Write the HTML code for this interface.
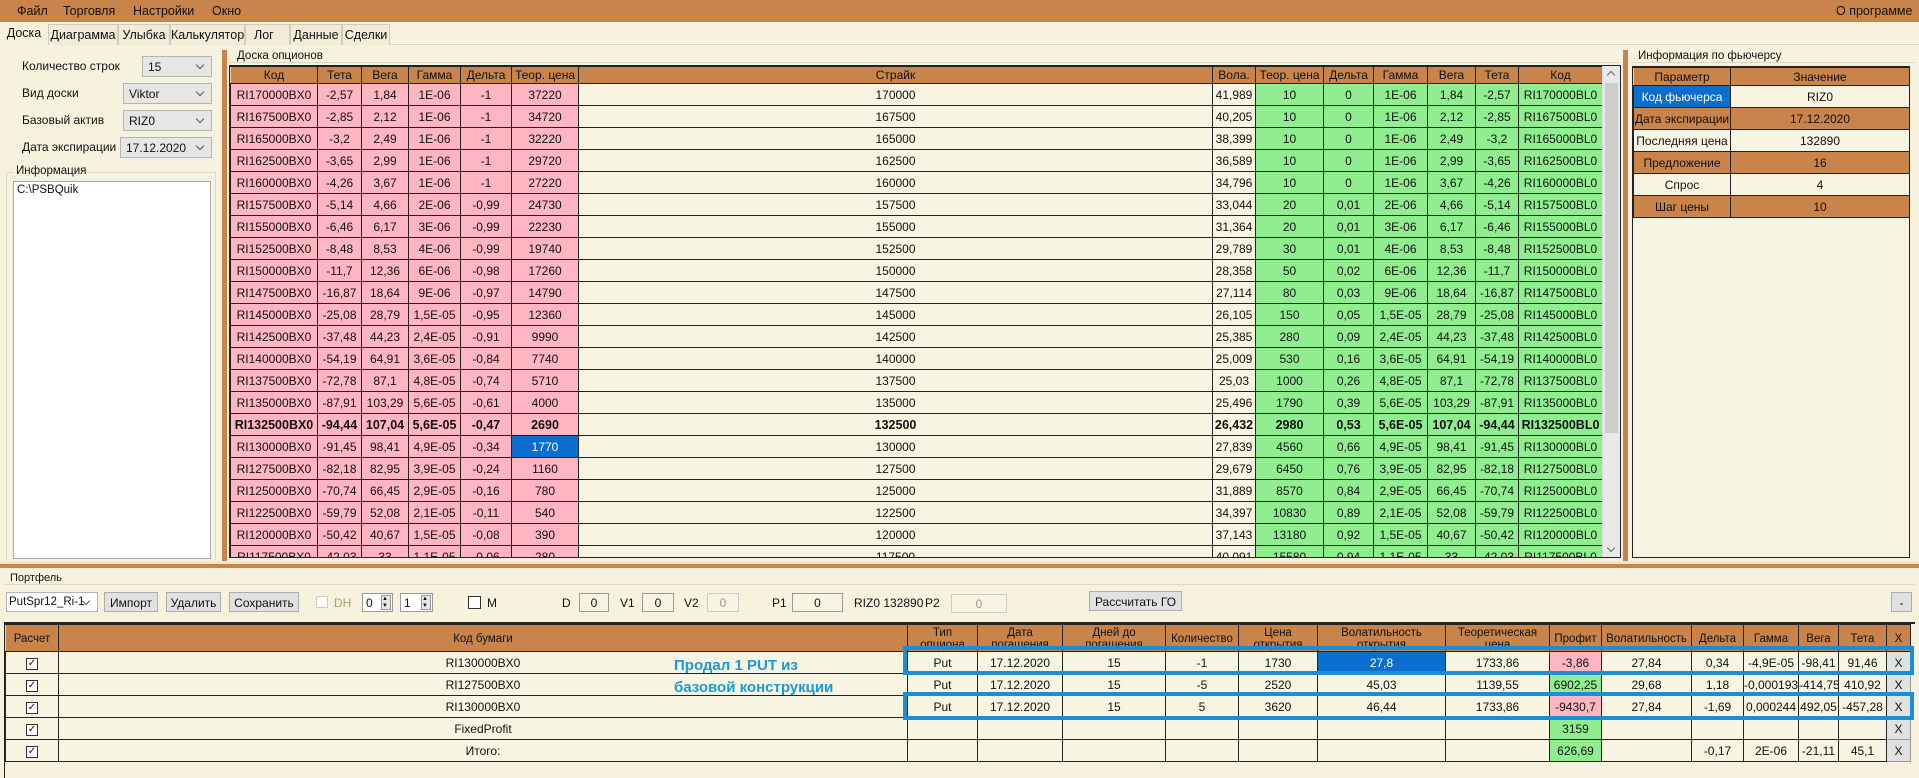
<!DOCTYPE html>
<html><head><meta charset="utf-8"><style>
*{box-sizing:border-box;margin:0;padding:0}
body{width:1919px;height:778px;overflow:hidden;background:#F6F2DE;font-family:"Liberation Sans","DejaVu Sans",sans-serif;font-size:12px;color:#111;position:relative}
.a{position:absolute}
.menu{left:0;top:0;width:1919px;height:22px;background:#C8844A;}
.menu span{position:absolute;top:4px;font-size:12.5px}
.tabs{left:0;top:22px;width:1919px;height:23px;background:#F6F2DE;border-bottom:1px solid #d8d4c4}
.tab{position:absolute;top:2px;height:21px;border:1px solid #d0ccbc;border-bottom:none;background:#F0ECD8;padding:3px 0 0;text-align:center;font-size:12.5px}
.combo{position:absolute;height:21px;background:#e6e6e6;border:1px solid #b4b4b4;padding:3px 5px;font-size:12px}
.combo:after{content:"";position:absolute;right:8px;top:5px;width:5px;height:5px;border-right:1px solid #555;border-bottom:1px solid #555;transform:rotate(45deg)}
.lbl{position:absolute;font-size:12px}
table{border-collapse:collapse;table-layout:fixed}
td,th{border:1px solid #222;text-align:center;white-space:nowrap;overflow:hidden;font-weight:normal}
.bt th{background:#C8844A;height:17px;font-size:12px;border-color:#222;border-left-color:#e9d2bd}
.bt td{height:22px;font-size:12px}
.p{background:#FFB6C1!important}.g{background:#90EE90!important}.c{background:#F8F4E2}
.sel{background:#0A6ECE!important;color:#fff}
.bold td{font-weight:bold;font-size:12.5px}
.vbar{background:#C8844A}
.btn{position:absolute;height:20px;background:#e1e1e1;border:1px solid #adadad;font-size:12px;text-align:center;padding-top:3px}
.box{position:absolute;height:19px;border:1px solid #9a9a9a;background:#F8F4E2;text-align:center;font-size:12px;padding-top:2px}
.pt th{background:#C8844A;height:27px;font-size:11.5px;line-height:12px;vertical-align:top;padding-top:2px;border-left-color:#e9d2bd}
.pt td{height:22px;background:#F8F4E2;font-size:12px}
.cb{display:inline-block;width:12px;height:12px;border:1px solid #333;font-size:10px;line-height:10px;background:#fff}
.x{background:#e1e1e1!important;border:1px solid #999}
.blue{position:absolute;border:4px solid #1A8FD6}
</style></head><body>
<div class="a menu"><span style="left:17px">Файл</span><span style="left:63px">Торговля</span><span style="left:133px">Настройки</span><span style="left:212px">Окно</span><span style="left:1836px">О программе</span></div>
<div class="a tabs">
<div class="tab" style="left:0;width:48px;top:0;height:23px;background:#F6F2DE;border-color:#F6F2DE">Доска</div>
<div class="tab" style="left:48px;width:70px">Диаграмма</div>
<div class="tab" style="left:118px;width:52px">Улыбка</div>
<div class="tab" style="left:170px;width:75px">Калькулятор</div>
<div class="tab" style="left:245px;width:45px;text-align:left;padding-left:8px">Лог</div>
<div class="tab" style="left:290px;width:52px">Данные</div>
<div class="tab" style="left:342px;width:48px">Сделки</div>
</div>
<div class="lbl" style="left:22px;top:59px">Количество строк</div>
<div class="combo" style="left:142px;top:56px;width:70px">15</div>
<div class="lbl" style="left:22px;top:86px">Вид доски</div>
<div class="combo" style="left:123px;top:83px;width:89px">Viktor</div>
<div class="lbl" style="left:22px;top:113px">Базовый актив</div>
<div class="combo" style="left:123px;top:110px;width:89px">RIZ0</div>
<div class="lbl" style="left:22px;top:140px">Дата экспирации</div>
<div class="combo" style="left:120px;top:137px;width:92px">17.12.2020</div>
<div class="a" style="left:6px;top:172px;width:210px;height:390px;border:1px solid #dcd8c8"></div>
<div class="lbl" style="left:14px;top:165px;background:#F6F2DE;padding:0 2px;font-size:11.5px">Информация</div>
<div class="a" style="left:13px;top:181px;width:198px;height:378px;background:#fff;border:1px solid #aaa;padding:2px 3px;font-size:11.5px">C:\PSBQuik</div>
<div class="a vbar" style="left:222px;top:50px;width:5px;height:512px"></div>
<div class="a" style="left:229px;top:62px;width:1390px;height:1px;background:#dcd8c8"></div>
<div class="lbl" style="left:235px;top:50px;background:#F6F2DE;padding:0 2px;font-size:11.5px">Доска опционов</div>
<div class="a" style="left:229px;top:65px;width:1392px;height:493px;overflow:hidden;border:1px solid #222;background:#F8F4E2">
<table class="bt" style="width:1372px">
<colgroup><col style="width:87px"><col style="width:44px"><col style="width:47px"><col style="width:52px"><col style="width:51px"><col style="width:67px"><col style="width:634px"><col style="width:43px"><col style="width:68px"><col style="width:50px"><col style="width:54px"><col style="width:48px"><col style="width:43px"><col style="width:84px"></colgroup>
<tr><th>Код</th><th>Тета</th><th>Вега</th><th>Гамма</th><th>Дельта</th><th>Теор. цена</th><th>Страйк</th><th>Вола.</th><th>Теор. цена</th><th>Дельта</th><th>Гамма</th><th>Вега</th><th>Тета</th><th>Код</th></tr>
<tr><td class="p">RI170000BX0</td><td class="p">-2,57</td><td class="p">1,84</td><td class="p">1E-06</td><td class="p">-1</td><td class="p">37220</td><td class="c">170000</td><td class="c">41,989</td><td class="g">10</td><td class="g">0</td><td class="g">1E-06</td><td class="g">1,84</td><td class="g">-2,57</td><td class="g">RI170000BL0</td></tr>
<tr><td class="p">RI167500BX0</td><td class="p">-2,85</td><td class="p">2,12</td><td class="p">1E-06</td><td class="p">-1</td><td class="p">34720</td><td class="c">167500</td><td class="c">40,205</td><td class="g">10</td><td class="g">0</td><td class="g">1E-06</td><td class="g">2,12</td><td class="g">-2,85</td><td class="g">RI167500BL0</td></tr>
<tr><td class="p">RI165000BX0</td><td class="p">-3,2</td><td class="p">2,49</td><td class="p">1E-06</td><td class="p">-1</td><td class="p">32220</td><td class="c">165000</td><td class="c">38,399</td><td class="g">10</td><td class="g">0</td><td class="g">1E-06</td><td class="g">2,49</td><td class="g">-3,2</td><td class="g">RI165000BL0</td></tr>
<tr><td class="p">RI162500BX0</td><td class="p">-3,65</td><td class="p">2,99</td><td class="p">1E-06</td><td class="p">-1</td><td class="p">29720</td><td class="c">162500</td><td class="c">36,589</td><td class="g">10</td><td class="g">0</td><td class="g">1E-06</td><td class="g">2,99</td><td class="g">-3,65</td><td class="g">RI162500BL0</td></tr>
<tr><td class="p">RI160000BX0</td><td class="p">-4,26</td><td class="p">3,67</td><td class="p">1E-06</td><td class="p">-1</td><td class="p">27220</td><td class="c">160000</td><td class="c">34,796</td><td class="g">10</td><td class="g">0</td><td class="g">1E-06</td><td class="g">3,67</td><td class="g">-4,26</td><td class="g">RI160000BL0</td></tr>
<tr><td class="p">RI157500BX0</td><td class="p">-5,14</td><td class="p">4,66</td><td class="p">2E-06</td><td class="p">-0,99</td><td class="p">24730</td><td class="c">157500</td><td class="c">33,044</td><td class="g">20</td><td class="g">0,01</td><td class="g">2E-06</td><td class="g">4,66</td><td class="g">-5,14</td><td class="g">RI157500BL0</td></tr>
<tr><td class="p">RI155000BX0</td><td class="p">-6,46</td><td class="p">6,17</td><td class="p">3E-06</td><td class="p">-0,99</td><td class="p">22230</td><td class="c">155000</td><td class="c">31,364</td><td class="g">20</td><td class="g">0,01</td><td class="g">3E-06</td><td class="g">6,17</td><td class="g">-6,46</td><td class="g">RI155000BL0</td></tr>
<tr><td class="p">RI152500BX0</td><td class="p">-8,48</td><td class="p">8,53</td><td class="p">4E-06</td><td class="p">-0,99</td><td class="p">19740</td><td class="c">152500</td><td class="c">29,789</td><td class="g">30</td><td class="g">0,01</td><td class="g">4E-06</td><td class="g">8,53</td><td class="g">-8,48</td><td class="g">RI152500BL0</td></tr>
<tr><td class="p">RI150000BX0</td><td class="p">-11,7</td><td class="p">12,36</td><td class="p">6E-06</td><td class="p">-0,98</td><td class="p">17260</td><td class="c">150000</td><td class="c">28,358</td><td class="g">50</td><td class="g">0,02</td><td class="g">6E-06</td><td class="g">12,36</td><td class="g">-11,7</td><td class="g">RI150000BL0</td></tr>
<tr><td class="p">RI147500BX0</td><td class="p">-16,87</td><td class="p">18,64</td><td class="p">9E-06</td><td class="p">-0,97</td><td class="p">14790</td><td class="c">147500</td><td class="c">27,114</td><td class="g">80</td><td class="g">0,03</td><td class="g">9E-06</td><td class="g">18,64</td><td class="g">-16,87</td><td class="g">RI147500BL0</td></tr>
<tr><td class="p">RI145000BX0</td><td class="p">-25,08</td><td class="p">28,79</td><td class="p">1,5E-05</td><td class="p">-0,95</td><td class="p">12360</td><td class="c">145000</td><td class="c">26,105</td><td class="g">150</td><td class="g">0,05</td><td class="g">1,5E-05</td><td class="g">28,79</td><td class="g">-25,08</td><td class="g">RI145000BL0</td></tr>
<tr><td class="p">RI142500BX0</td><td class="p">-37,48</td><td class="p">44,23</td><td class="p">2,4E-05</td><td class="p">-0,91</td><td class="p">9990</td><td class="c">142500</td><td class="c">25,385</td><td class="g">280</td><td class="g">0,09</td><td class="g">2,4E-05</td><td class="g">44,23</td><td class="g">-37,48</td><td class="g">RI142500BL0</td></tr>
<tr><td class="p">RI140000BX0</td><td class="p">-54,19</td><td class="p">64,91</td><td class="p">3,6E-05</td><td class="p">-0,84</td><td class="p">7740</td><td class="c">140000</td><td class="c">25,009</td><td class="g">530</td><td class="g">0,16</td><td class="g">3,6E-05</td><td class="g">64,91</td><td class="g">-54,19</td><td class="g">RI140000BL0</td></tr>
<tr><td class="p">RI137500BX0</td><td class="p">-72,78</td><td class="p">87,1</td><td class="p">4,8E-05</td><td class="p">-0,74</td><td class="p">5710</td><td class="c">137500</td><td class="c">25,03</td><td class="g">1000</td><td class="g">0,26</td><td class="g">4,8E-05</td><td class="g">87,1</td><td class="g">-72,78</td><td class="g">RI137500BL0</td></tr>
<tr><td class="p">RI135000BX0</td><td class="p">-87,91</td><td class="p">103,29</td><td class="p">5,6E-05</td><td class="p">-0,61</td><td class="p">4000</td><td class="c">135000</td><td class="c">25,496</td><td class="g">1790</td><td class="g">0,39</td><td class="g">5,6E-05</td><td class="g">103,29</td><td class="g">-87,91</td><td class="g">RI135000BL0</td></tr>
<tr class="bold"><td class="p">RI132500BX0</td><td class="p">-94,44</td><td class="p">107,04</td><td class="p">5,6E-05</td><td class="p">-0,47</td><td class="p">2690</td><td class="c">132500</td><td class="c">26,432</td><td class="g">2980</td><td class="g">0,53</td><td class="g">5,6E-05</td><td class="g">107,04</td><td class="g">-94,44</td><td class="g">RI132500BL0</td></tr>
<tr><td class="p">RI130000BX0</td><td class="p">-91,45</td><td class="p">98,41</td><td class="p">4,9E-05</td><td class="p">-0,34</td><td class="sel">1770</td><td class="c">130000</td><td class="c">27,839</td><td class="g">4560</td><td class="g">0,66</td><td class="g">4,9E-05</td><td class="g">98,41</td><td class="g">-91,45</td><td class="g">RI130000BL0</td></tr>
<tr><td class="p">RI127500BX0</td><td class="p">-82,18</td><td class="p">82,95</td><td class="p">3,9E-05</td><td class="p">-0,24</td><td class="p">1160</td><td class="c">127500</td><td class="c">29,679</td><td class="g">6450</td><td class="g">0,76</td><td class="g">3,9E-05</td><td class="g">82,95</td><td class="g">-82,18</td><td class="g">RI127500BL0</td></tr>
<tr><td class="p">RI125000BX0</td><td class="p">-70,74</td><td class="p">66,45</td><td class="p">2,9E-05</td><td class="p">-0,16</td><td class="p">780</td><td class="c">125000</td><td class="c">31,889</td><td class="g">8570</td><td class="g">0,84</td><td class="g">2,9E-05</td><td class="g">66,45</td><td class="g">-70,74</td><td class="g">RI125000BL0</td></tr>
<tr><td class="p">RI122500BX0</td><td class="p">-59,79</td><td class="p">52,08</td><td class="p">2,1E-05</td><td class="p">-0,11</td><td class="p">540</td><td class="c">122500</td><td class="c">34,397</td><td class="g">10830</td><td class="g">0,89</td><td class="g">2,1E-05</td><td class="g">52,08</td><td class="g">-59,79</td><td class="g">RI122500BL0</td></tr>
<tr><td class="p">RI120000BX0</td><td class="p">-50,42</td><td class="p">40,67</td><td class="p">1,5E-05</td><td class="p">-0,08</td><td class="p">390</td><td class="c">120000</td><td class="c">37,143</td><td class="g">13180</td><td class="g">0,92</td><td class="g">1,5E-05</td><td class="g">40,67</td><td class="g">-50,42</td><td class="g">RI120000BL0</td></tr>
<tr><td class="p">RI117500BX0</td><td class="p">-42,03</td><td class="p">33</td><td class="p">1,1E-05</td><td class="p">-0,06</td><td class="p">280</td><td class="c">117500</td><td class="c">40,091</td><td class="g">15580</td><td class="g">0,94</td><td class="g">1,1E-05</td><td class="g">33</td><td class="g">-42,03</td><td class="g">RI117500BL0</td></tr>
</table>
<div class="a" style="left:1372px;top:0;width:18px;height:491px;background:#e9e9e9;border-left:1px solid #ddd"><div style="position:absolute;left:2px;top:17px;width:13px;height:350px;background:#cdcdcd"></div><div style="position:absolute;left:5px;top:6px;width:6px;height:6px;border-left:1px solid #666;border-top:1px solid #666;transform:rotate(45deg)"></div><div style="position:absolute;left:5px;bottom:6px;width:6px;height:6px;border-right:1px solid #666;border-bottom:1px solid #666;transform:rotate(45deg)"></div></div>
</div>
<div class="a vbar" style="left:1623px;top:50px;width:5px;height:512px"></div>
<div class="a" style="left:1631px;top:62px;width:284px;height:1px;background:#dcd8c8"></div>
<div class="lbl" style="left:1636px;top:50px;background:#F6F2DE;padding:0 2px;font-size:11.5px">Информация по фьючерсу</div>
<div class="a" style="left:1632px;top:66px;width:278px;height:492px;border:1px solid #222;background:#F8F4E2;overflow:hidden">
<table class="bt" style="width:276px">
<colgroup><col style="width:97px"><col style="width:179px"></colgroup>
<tr><th style="height:18px">Параметр</th><th>Значение</th></tr>
<tr><td class="sel" style="height:21px">Код фьючерса</td><td class="c">RIZ0</td></tr>
<tr><td style="height:21px;background:#C8844A">Дата экспирации</td><td style="background:#C8844A">17.12.2020</td></tr>
<tr><td class="c" style="height:21px">Последняя цена</td><td class="c">132890</td></tr>
<tr><td style="height:21px;background:#C8844A">Предложение</td><td style="background:#C8844A">16</td></tr>
<tr><td class="c" style="height:21px">Спрос</td><td class="c">4</td></tr>
<tr><td style="height:21px;background:#C8844A">Шаг цены</td><td style="background:#C8844A">10</td></tr>
</table></div>
<div class="a" style="left:0;top:561px;width:1919px;height:3px;background:#ece8d6"></div>
<div class="a vbar" style="left:0;top:564px;width:1919px;height:4px"></div>
<div class="a" style="left:4px;top:584px;width:1911px;height:1px;background:#dcd8c8"></div>
<div class="lbl" style="left:8px;top:572px;background:#F6F2DE;padding:0 2px;font-size:11px">Портфель</div>
<div class="combo" style="left:6px;top:592px;width:92px;height:20px;background:#fff;padding:3px 2px;font-size:11.5px">PutSpr12_Ri-1</div>
<div class="btn" style="left:104px;top:592px;width:54px">Импорт</div>
<div class="btn" style="left:166px;top:592px;width:55px">Удалить</div>
<div class="btn" style="left:229px;top:592px;width:70px">Сохранить</div>
<div class="a" style="left:316px;top:596px;width:12px;height:12px;border:1px solid #ccc;background:#fff"></div>
<div class="lbl" style="left:334px;top:596px;color:#b0a060">DH</div>
<div class="box" style="left:362px;top:593px;width:31px;text-align:left;padding-left:3px;background:#fff">0<span style="position:absolute;right:1px;top:1px;width:10px;height:15px;border:1px solid #999;background:#e6e6e6;font-size:6px;line-height:7px">▲<br>▼</span></div>
<div class="box" style="left:400px;top:593px;width:33px;text-align:left;padding-left:3px;background:#fff">1<span style="position:absolute;right:1px;top:1px;width:10px;height:15px;border:1px solid #999;background:#e6e6e6;font-size:6px;line-height:7px">▲<br>▼</span></div>
<div class="a" style="left:468px;top:596px;width:13px;height:13px;border:1px solid #333;background:#fff"></div>
<div class="lbl" style="left:487px;top:596px">M</div>
<div class="lbl" style="left:562px;top:596px">D</div>
<div class="box" style="left:579px;top:593px;width:30px">0</div>
<div class="lbl" style="left:620px;top:596px">V1</div>
<div class="box" style="left:642px;top:593px;width:32px">0</div>
<div class="lbl" style="left:684px;top:596px">V2</div>
<div class="box" style="left:707px;top:593px;width:32px;color:#999;border-color:#ccc">0</div>
<div class="lbl" style="left:772px;top:596px">P1</div>
<div class="box" style="left:792px;top:593px;width:51px">0</div>
<div class="lbl" style="left:854px;top:596px">RIZ0 132890</div>
<div class="lbl" style="left:925px;top:596px">P2</div>
<div class="box" style="left:951px;top:594px;width:56px;color:#999;border-color:#ccc">0</div>
<div class="btn" style="left:1089px;top:591px;width:93px">Рассчитать ГО</div>
<div class="btn" style="left:1891px;top:592px;width:21px">-</div>
<div class="a" style="left:4px;top:622px;width:1911px;height:156px;border-top:2px solid #222;border-left:1px solid #222">
<table class="pt" style="width:1905px">
<colgroup><col style="width:53px"><col style="width:849px"><col style="width:70px"><col style="width:85px"><col style="width:103px"><col style="width:73px"><col style="width:79px"><col style="width:128px"><col style="width:104px"><col style="width:52px"><col style="width:90px"><col style="width:52px"><col style="width:55px"><col style="width:40px"><col style="width:48px"><col style="width:24px"></colgroup>
<tr><th style="vertical-align:middle">Расчет</th><th style="vertical-align:middle">Код бумаги</th><th>Тип<br>опциона</th><th>Дата<br>погашения</th><th>Дней до<br>погашения</th><th style="vertical-align:middle">Количество</th><th>Цена<br>открытия</th><th>Волатильность<br>открытия</th><th>Теоретическая<br>цена</th><th style="vertical-align:middle">Профит</th><th style="vertical-align:middle">Волатильность</th><th style="vertical-align:middle">Дельта</th><th style="vertical-align:middle">Гамма</th><th style="vertical-align:middle">Вега</th><th style="vertical-align:middle">Тета</th><th style="vertical-align:middle">X</th></tr>
<tr><td><span class="cb">✓</span></td><td>RI130000BX0</td><td>Put</td><td>17.12.2020</td><td>15</td><td>-1</td><td>1730</td><td class="sel">27,8</td><td>1733,86</td><td class="p">-3,86</td><td>27,84</td><td>0,34</td><td>-4,9E-05</td><td>-98,41</td><td>91,46</td><td class="x">X</td></tr>
<tr><td><span class="cb">✓</span></td><td>RI127500BX0</td><td>Put</td><td>17.12.2020</td><td>15</td><td>-5</td><td>2520</td><td>45,03</td><td>1139,55</td><td class="g">6902,25</td><td>29,68</td><td>1,18</td><td>-0,000193</td><td>-414,75</td><td>410,92</td><td class="x">X</td></tr>
<tr><td><span class="cb">✓</span></td><td>RI130000BX0</td><td>Put</td><td>17.12.2020</td><td>15</td><td>5</td><td>3620</td><td>46,44</td><td>1733,86</td><td class="p">-9430,7</td><td>27,84</td><td>-1,69</td><td>0,000244</td><td>492,05</td><td>-457,28</td><td class="x">X</td></tr>
<tr><td><span class="cb">✓</span></td><td>FixedProfit</td><td></td><td></td><td></td><td></td><td></td><td></td><td></td><td class="g">3159</td><td></td><td></td><td></td><td></td><td></td><td class="x">X</td></tr>
<tr><td><span class="cb">✓</span></td><td>Итого:</td><td></td><td></td><td></td><td></td><td></td><td></td><td></td><td class="g">626,69</td><td></td><td>-0,17</td><td>2E-06</td><td>-21,11</td><td>45,1</td><td class="x">X</td></tr>
</table></div>
<div class="blue" style="left:903px;top:646px;width:1011px;height:29px"></div>
<div class="blue" style="left:903px;top:692px;width:1011px;height:28px"></div>
<div class="lbl" style="left:674px;top:655px;color:#1A9AD6;font-weight:bold;font-size:15px;line-height:22px">Продал 1 PUT из<br>базовой конструкции</div>
</body></html>
